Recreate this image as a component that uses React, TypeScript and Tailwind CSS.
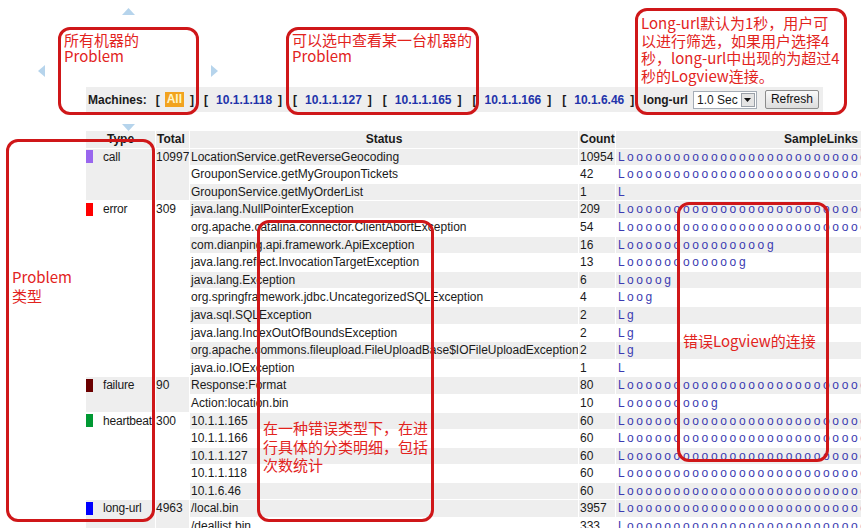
import React from 'react'

type Row = { status: string; count: number; links: string }
type Group = { type: string; color: string; total: number; rows: Row[] }

function sample(o: number, g = false): string {
  const parts = ['L']
  for (let i = 0; i < o; i++) parts.push('o')
  if (g) parts.push('g')
  return parts.join(' ')
}

const FULL = sample(30)

const groups: Group[] = [
  {
    type: 'call',
    color: 'bg-[#9966ee]',
    total: 10997,
    rows: [
      { status: 'LocationService.getReverseGeocoding', count: 10954, links: FULL },
      { status: 'GrouponService.getMyGrouponTickets', count: 42, links: FULL },
      { status: 'GrouponService.getMyOrderList', count: 1, links: sample(0) },
    ],
  },
  {
    type: 'error',
    color: 'bg-[#ff0000]',
    total: 309,
    rows: [
      { status: 'java.lang.NullPointerException', count: 209, links: FULL },
      { status: 'org.apache.catalina.connector.ClientAbortException', count: 54, links: FULL },
      { status: 'com.dianping.api.framework.ApiException', count: 16, links: sample(15, true) },
      { status: 'java.lang.reflect.InvocationTargetException', count: 13, links: sample(12, true) },
      { status: 'java.lang.Exception', count: 6, links: sample(4, true) },
      { status: 'org.springframework.jdbc.UncategorizedSQLException', count: 4, links: sample(2, true) },
      { status: 'java.sql.SQLException', count: 2, links: sample(0, true) },
      { status: 'java.lang.IndexOutOfBoundsException', count: 2, links: sample(0, true) },
      { status: 'org.apache.commons.fileupload.FileUploadBase$IOFileUploadException', count: 2, links: sample(0, true) },
      { status: 'java.io.IOException', count: 1, links: sample(0) },
    ],
  },
  {
    type: 'failure',
    color: 'bg-[#6b0000]',
    total: 90,
    rows: [
      { status: 'Response:Format', count: 80, links: FULL },
      { status: 'Action:location.bin', count: 10, links: sample(9, true) },
    ],
  },
  {
    type: 'heartbeat',
    color: 'bg-[#009933]',
    total: 300,
    rows: [
      { status: '10.1.1.165', count: 60, links: FULL },
      { status: '10.1.1.166', count: 60, links: FULL },
      { status: '10.1.1.127', count: 60, links: FULL },
      { status: '10.1.1.118', count: 60, links: FULL },
      { status: '10.1.6.46', count: 60, links: FULL },
    ],
  },
  {
    type: 'long-url',
    color: 'bg-[#0000ff]',
    total: 4963,
    rows: [
      { status: '/local.bin', count: 3957, links: FULL },
      { status: '/deallist.bin', count: 333, links: FULL },
    ],
  },
]

const ips = ['10.1.1.118', '10.1.1.127', '10.1.1.165', '10.1.1.166', '10.1.6.46']

function Note({
  className,
  textClass,
  children,
}: {
  className: string
  textClass: string
  children: React.ReactNode
}) {
  return (
    <div className={`absolute rounded-[12px] border-[3px] border-[#cf1719] ${className}`}>
      <div
        className={`whitespace-nowrap text-[15px] text-[#e2231d] font-['Noto_Sans_CJK_SC',sans-serif] ${textClass}`}
      >
        {children}
      </div>
    </div>
  )
}

function Arrow({ dir, className }: { dir: 'up' | 'down' | 'left' | 'right'; className: string }) {
  const pts = {
    up: '0,7 6.5,0 13,7',
    down: '0,0 13,0 6.5,7',
    left: '7,0 7,12 0,6',
    right: '0,0 7,6 0,12',
  }[dir]
  const vertical = dir === 'up' || dir === 'down'
  return (
    <svg
      className={`absolute ${className}`}
      width={vertical ? 13 : 7}
      height={vertical ? 7 : 12}
      viewBox={vertical ? '0 0 13 7' : '0 0 7 12'}
    >
      <polygon points={pts} fill="#b6d4ec" />
    </svg>
  )
}

function MachinesBar() {
  return (
    <div className="flex h-[25px] w-[737px] items-center bg-[#eeeeee] pl-[2px] text-[12px] font-bold text-[#1a1a1a]">
      <span>Machines:</span>
      <span className="ml-[9px]">[</span>
      <span className="ml-[5px] bg-[#f2a31f] px-[2px] leading-[15px] text-[#fff6c8]">All</span>
      <span className="ml-[6px]">]</span>
      {ips.map((ip, i) => (
        <span key={ip} className={`flex items-center ${i === 0 ? 'ml-[10px]' : 'ml-[11px]'}`}>
          <span>[</span>
          <a className="ml-[8px] text-[#2233aa]">{ip}</a>
          <span className="ml-[6px]">]</span>
        </span>
      ))}
      <span className="ml-[9px]">long-url</span>
      <div className="ml-[5px] flex h-[18px] w-[64px] items-center border border-[#a5acb5] bg-white font-normal">
        <span className="flex-1 pl-[3px]">1.0 Sec</span>
        <span className="mr-px flex h-[14px] w-[14px] items-center justify-center border border-[#9aa0a8] bg-[#e4e4e4]">
          <svg width="7" height="4" viewBox="0 0 7 4">
            <polygon points="0,0 7,0 3.5,4" fill="#111" />
          </svg>
        </span>
      </div>
      <button className="ml-[8px] h-[19px] w-[54px] rounded-[2px] border border-[#8c8c8c] bg-gradient-to-b from-[#fafafa] to-[#dddddd] text-[12px] font-normal leading-[17px] text-[#111]">
        Refresh
      </button>
    </div>
  )
}

function ProblemTable() {
  const gray = 'bg-[#eeeeee]'
  return (
    <table className="ml-[-1px] w-[777px] table-fixed border-separate border-spacing-px text-[12px] leading-[16.6px] text-[#1a1a1a]">
      <colgroup>
        <col className="w-[69px]" />
        <col className="w-[33px]" />
        <col className="w-[388px]" />
        <col className="w-[36px]" />
        <col />
      </colgroup>
      <thead>
        <tr className="h-[16.6px] font-bold">
          <th className={`${gray} p-0 text-center`}>Type</th>
          <th className={`${gray} p-0 pl-px text-left`}>Total</th>
          <th className={`${gray} p-0 text-center`}>Status</th>
          <th className={`${gray} p-0 pl-px text-left`}>Count</th>
          <th className={`${gray} p-0 pr-[3px] text-right`}>SampleLinks</th>
        </tr>
      </thead>
      <tbody>
        {groups.map((g, gi) =>
          g.rows.map((r, ri) => {
            const groupBg = gi % 2 === 0 ? gray : 'bg-white'
            const rowBg = ri % 2 === 0 ? gray : 'bg-white'
            return (
              <tr key={g.type + r.status} className="h-[16.6px]">
                {ri === 0 && (
                  <>
                    <td rowSpan={g.rows.length} className={`${groupBg} p-0 align-top`}>
                      <div className="flex h-[16.6px] items-center whitespace-nowrap">
                        <span className={`h-[13px] w-[7px] shrink-0 ${g.color}`} />
                        <span className="ml-[10px] shrink-0 tracking-[-0.2px]">{g.type}</span>
                      </div>
                    </td>
                    <td rowSpan={g.rows.length} className={`${groupBg} p-0 align-top`}>
                      {g.total}
                    </td>
                  </>
                )}
                <td className={`${rowBg} overflow-hidden whitespace-nowrap p-0 pl-px`}>{r.status}</td>
                <td className={`${rowBg} p-0 pl-px`}>{r.count}</td>
                <td
                  className={`${rowBg} overflow-hidden whitespace-nowrap p-0 pl-[2px] text-[#3b3bb2] [word-spacing:-0.67px]`}
                >
                  {r.links}
                </td>
              </tr>
            )
          }),
        )}
      </tbody>
    </table>
  )
}

export default function App() {
  return (
    <div className="relative h-[528px] w-[862px] overflow-hidden bg-white font-['Liberation_Sans',Arial,sans-serif]">
      <div className="pl-[86px] pt-[87px]">
        <MachinesBar />
        <div className="mt-[18px]">
          <ProblemTable />
        </div>
      </div>

      <Arrow dir="up" className="left-[122px] top-[8px]" />
      <Arrow dir="left" className="left-[38px] top-[65px]" />
      <Arrow dir="right" className="left-[211px] top-[65px]" />
      <Arrow dir="down" className="left-[122px] top-[124px]" />

      <Note className="left-[58px] top-[27px] h-[88px] w-[141px]" textClass="pl-[3px] pt-[2px] leading-[16px]">
        所有机器的
        <br />
        Problem
      </Note>
      <Note className="left-[286px] top-[27px] h-[88px] w-[193px]" textClass="pl-[3px] pt-[2px] leading-[16px]">
        可以选中查看某一台机器的
        <br />
        Problem
      </Note>
      <Note className="left-[635px] top-[8px] h-[107px] w-[212px]" textClass="pl-[3px] pt-[3px] leading-[17.7px]">
        Long-url默认为1秒，用户可
        <br />
        以进行筛选，如果用户选择4
        <br />
        秒，long-url中出现的为超过4
        <br />
        秒的Logview连接。
      </Note>
      <Note className="left-[6px] top-[139px] h-[383px] w-[149px]" textClass="pl-[3px] pt-[125px] leading-[19px]">
        Problem
        <br />
        类型
      </Note>
      <Note className="left-[257px] top-[220px] h-[302px] w-[177px]" textClass="pl-[3px] pt-[196px] leading-[18.5px]">
        在一种错误类型下，在进
        <br />
        行具体的分类明细，包括
        <br />
        次数统计
      </Note>
      <Note className="left-[677px] top-[202px] h-[260px] w-[152px]" textClass="pl-[3px] pt-[127px] leading-[18px]">
        错误Logview的连接
      </Note>
    </div>
  )
}
